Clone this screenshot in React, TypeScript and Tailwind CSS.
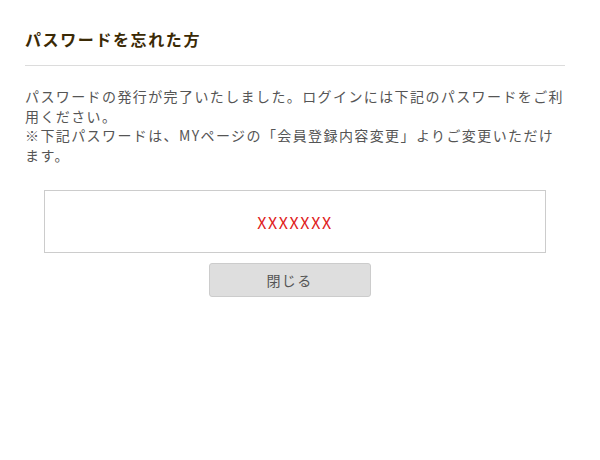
export default function App() {
  return (
    <div
      className="h-[460px] w-[600px] bg-white px-[25px] pt-[26px]"
      style={{ fontFamily: '"Noto Sans CJK JP", "Noto Sans", sans-serif' }}
    >
      <div className="w-[540px]">
        <h1 className="border-b border-[#dcdcdc] pb-[13px] text-[16px] font-bold leading-[26px] tracking-[0.1em] text-[#3b2a05]">
          パスワードを忘れた方
        </h1>

        <p className="mt-[21px] text-[14px] leading-[19.5px] tracking-[0.1em] text-[#555]">
          パスワードの発行が完了いたしました。ログインには下記のパスワードをご利用ください。
          <br />
          ※下記パスワードは、MYページの「会員登録内容変更」よりご変更いただけます。
        </p>

        <div className="mx-[19px] mt-[25px] flex h-[63px] items-center justify-center border border-[#ccc]">
          <span className="text-[16px] tracking-[0.1em] text-[#e02020]">XXXXXXX</span>
        </div>

        <div className="mt-[10px] flex justify-center pr-[11px]">
          <button className="h-[34px] w-[162px] rounded-[3px] border border-[#ccc] bg-[#dedede] text-[14px] tracking-[0.1em] text-[#555]">
            閉じる
          </button>
        </div>
      </div>
    </div>
  );
}
